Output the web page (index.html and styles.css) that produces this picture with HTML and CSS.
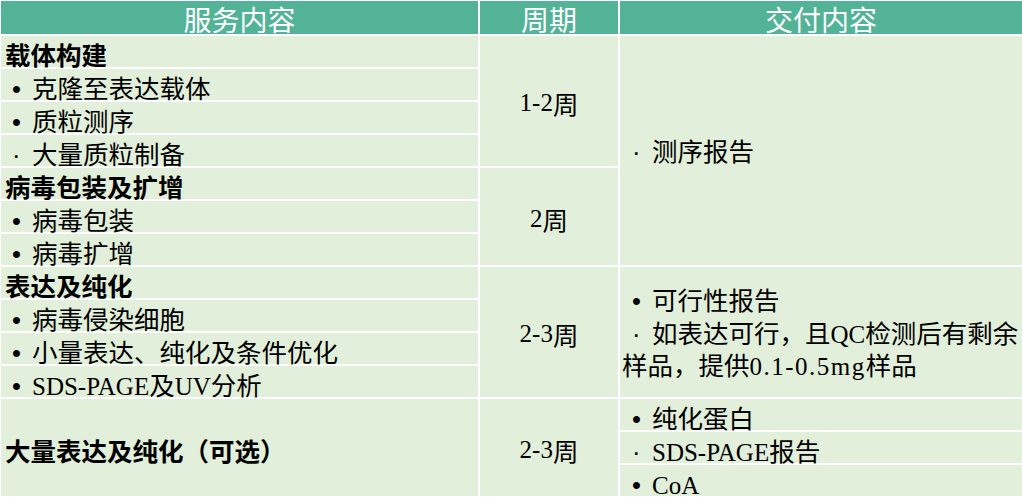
FILE: index.html
```html
<!DOCTYPE html>
<html lang="zh-CN">
<head>
<meta charset="utf-8">
<title>服务内容</title>
<link rel="stylesheet" href="styles.css">
</head>
<body>
<div class="sheet">
  <div class="hd">服务内容</div>
  <div class="hd">周期</div>
  <div class="hd">交付内容</div>

  <div class="cell l h">载体构建</div>
  <div class="cell m s4"><span class="en">1-2</span>周</div>
  <div class="cell r s7"><p><span class="b">·</span>测序报告</p></div>

  <div class="cell l"><span class="b">•</span>克隆至表达载体</div>
  <div class="cell l"><span class="b">•</span>质粒测序</div>
  <div class="cell l"><span class="b">·</span>大量质粒制备</div>

  <div class="cell l h">病毒包装及扩增</div>
  <div class="cell m s3"><span class="en">2</span>周</div>
  <div class="cell l"><span class="b">•</span>病毒包装</div>
  <div class="cell l"><span class="b">•</span>病毒扩增</div>

  <div class="cell l h">表达及纯化</div>
  <div class="cell m s4"><span class="en">2-3</span>周</div>
  <div class="cell r s4">
    <p><span class="b">•</span>可行性报告</p>
    <p><span class="b">·</span>如表达可行，且<span class="en">QC</span>检测后有剩余</p>
    <p>样品，提供<span class="en wide">0.1-0.5mg</span>样品</p>
  </div>
  <div class="cell l"><span class="b">•</span>病毒侵染细胞</div>
  <div class="cell l"><span class="b">•</span>小量表达、纯化及条件优化</div>
  <div class="cell l"><span class="b">•</span><span class="en">SDS-PAGE</span>及<span class="en">UV</span>分析</div>

  <div class="cell l h s3 mid">大量表达及纯化（可选）</div>
  <div class="cell m s3"><span class="en">2-3</span>周</div>
  <div class="cell r row"><span class="b">•</span>纯化蛋白</div>
  <div class="cell r row"><span class="b">·</span><span class="en">SDS-PAGE</span>报告</div>
  <div class="cell r row"><span class="b">•</span><span class="en">CoA</span></div>
</div>
</body>
</html>
```

FILE: styles.css
```css
html, body {
  margin: 0;
  padding: 0;
  background: #ffffff;
}

body {
  font-family: "Noto Sans CJK SC", "Liberation Sans", sans-serif;
  color: #000;
}

.sheet {
  display: grid;
  grid-template-columns: 477px 138px 402px;
  grid-template-rows: 33px repeat(14, 31px);
  gap: 2px;
  padding: 1px 0 0 1px;
  width: 1022px;
  box-sizing: border-box;
  background: #ffffff;
}

.hd {
  background: #53b397;
  color: #ffffff;
  font-size: 28px;
  display: flex;
  align-items: center;
  justify-content: center;
  padding-top: 2px;
  box-sizing: border-box;
  white-space: nowrap;
}

.cell {
  background: #e2efda;
  font-size: 25.5px;
  box-sizing: border-box;
  white-space: nowrap;
}

.l {
  grid-column: 1;
  line-height: 29px;
  padding: 3px 0 0 4px;
}

.h {
  font-weight: 700;
}

.mid {
  display: flex;
  align-items: center;
  padding-top: 3px;
}

.m {
  grid-column: 2;
  display: flex;
  align-items: center;
  justify-content: center;
  padding-top: 3px;
}

.r {
  grid-column: 3;
  padding-left: 2px;
}

.s3 { grid-row: span 3; }
.s4 { grid-row: span 4; }
.s7 { grid-row: span 7; }

.r.s7,
.r.s4 {
  display: flex;
  flex-direction: column;
  justify-content: center;
}

.r p {
  margin: 0;
  line-height: 32.5px;
}

.r.row {
  line-height: 29px;
  padding-top: 3px;
}

.b {
  display: inline-block;
  width: 27px;
  padding-left: 7px;
  box-sizing: border-box;
  font-family: "Liberation Sans", sans-serif;
  font-weight: 400;
  line-height: 1;
}

.r .b {
  width: 30px;
  padding-left: 10px;
}

.en {
  font-family: "Liberation Serif", serif;
  font-size: 25px;
  line-height: 1;
}

.en.wide {
  letter-spacing: 1.5px;
}
```
